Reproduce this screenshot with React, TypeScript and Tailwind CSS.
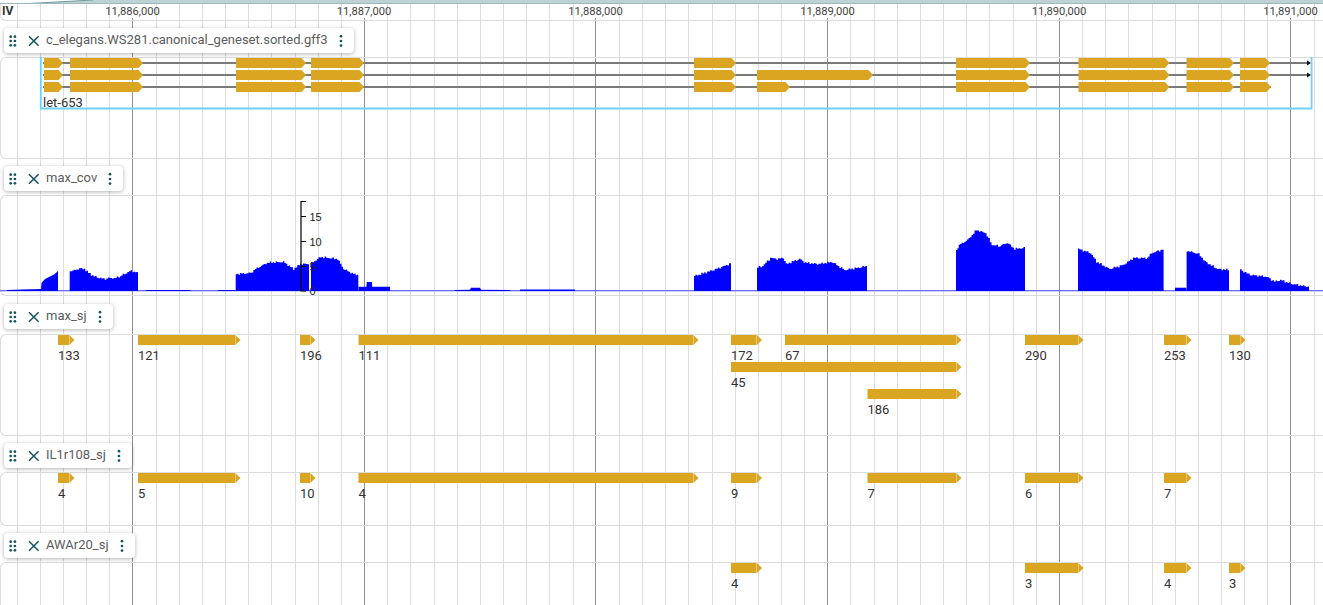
import type { ReactNode } from 'react'

const GOLD = '#daa520'
const TEAL = '#135560'
const MAJOR = [132.5, 364, 595.5, 827.5, 1059, 1290.5]
const COORDS = ['11,886,000', '11,887,000', '11,888,000', '11,889,000', '11,890,000', '11,891,000']

// minor grid lines sit every 100bp, skipping the 1000bp ones
const MINOR = Array.from({ length: 57 }, (_, i) => 16.7 + i * 23.16).filter((_, i) => i % 10 !== 5)

type Exon = [number, number]

const GENE_ROWS: { y: number; end: number; exons: Exon[] }[] = [
  {
    y: 58,
    end: 1310,
    exons: [[44, 62], [70, 142], [236, 305], [311, 363], [694, 735], [956, 1029], [1078.5, 1168.5], [1186.5, 1233], [1240, 1269]],
  },
  {
    y: 70,
    end: 1310,
    exons: [[44, 62], [70, 142], [236, 305], [311, 363], [694, 735], [757, 872], [956, 1029], [1078.5, 1168.5], [1186.5, 1233], [1240, 1269]],
  },
  {
    y: 82,
    end: 1271,
    exons: [[44, 62], [70, 142], [236, 305], [311, 363], [694, 735], [757, 789], [956, 1029], [1078.5, 1168.5], [1186.5, 1233], [1240, 1270]],
  },
]

type Junction = { x0: number; x1: number; y: number; label: string }

const MAX_SJ: Junction[] = [
  { x0: 58, x1: 74, y: 335, label: '133' },
  { x0: 138, x1: 240, y: 335, label: '121' },
  { x0: 300, x1: 315, y: 335, label: '196' },
  { x0: 358.5, x1: 698, y: 335, label: '111' },
  { x0: 731, x1: 761.5, y: 335, label: '172' },
  { x0: 785, x1: 961, y: 335, label: '67' },
  { x0: 731, x1: 961, y: 362, label: '45' },
  { x0: 867.5, x1: 961, y: 389, label: '186' },
  { x0: 1025, x1: 1083, y: 335, label: '290' },
  { x0: 1164, x1: 1191, y: 335, label: '253' },
  { x0: 1229, x1: 1245, y: 335, label: '130' },
]

const IL_SJ: Junction[] = [
  { x0: 58, x1: 74, y: 473, label: '4' },
  { x0: 138, x1: 240, y: 473, label: '5' },
  { x0: 300, x1: 315, y: 473, label: '10' },
  { x0: 358.5, x1: 698, y: 473, label: '4' },
  { x0: 731, x1: 761.5, y: 473, label: '9' },
  { x0: 867.5, x1: 961, y: 473, label: '7' },
  { x0: 1025, x1: 1083, y: 473, label: '6' },
  { x0: 1164, x1: 1191, y: 473, label: '7' },
]

const AWA_SJ: Junction[] = [
  { x0: 731, x1: 761.5, y: 563, label: '4' },
  { x0: 1025, x1: 1083, y: 563, label: '3' },
  { x0: 1164, x1: 1191, y: 563, label: '4' },
  { x0: 1229, x1: 1245, y: 563, label: '3' },
]

// coverage blocks, [x, y] in page pixels, sampled off the wiggle
const COVERAGE: [number, number][][] = [
  [[7, 290], [22, 289.5], [41, 289], [41.5, 283], [45, 279], [50, 276.5], [54, 274.5], [57, 272], [58, 270.5]],
  [[69.7, 271], [75, 270], [79, 268.5], [84, 269], [88, 273], [95, 277], [100, 278], [103, 279], [108, 278], [115, 278], [120, 276], [124, 274], [129, 271], [135, 272], [138, 273]],
  [[146, 290], [190, 290], [190.5, 290.5]],
  [[218, 290], [235, 290]],
  [[235.7, 274], [250, 273], [255, 269], [266.7, 262.7], [283, 262], [293, 269], [300, 264], [309, 264]],
  [[311, 263], [320, 257], [337, 259], [343, 269], [353, 274], [358.3, 275]],
  [[358.5, 286.7], [366.5, 286.7], [366.7, 282], [372, 282], [372.2, 286.7], [390, 286.7]],
  [[455, 290], [470, 289.7], [471, 287.8], [480, 287.8], [481, 289.7], [510, 290]],
  [[520, 289.5], [575, 289.5]],
  [[694, 276], [710, 271], [721, 267], [729, 264], [731, 262.5]],
  [[757, 267.7], [762, 266], [770, 258], [778, 259], [782.5, 257.7], [785.7, 264], [799, 259], [805, 262.7], [817, 264], [831.6, 262], [844, 270], [856, 268], [867, 266]],
  [[956, 250], [958.7, 245], [967, 240], [976, 230], [985, 233], [991.5, 245], [999.7, 246], [1006.6, 242.7], [1014, 249], [1025, 247.7]],
  [[1078, 249], [1090, 253], [1096, 261.7], [1109, 269], [1122.6, 265], [1133, 258], [1147, 258], [1151, 253], [1163.6, 249]],
  [[1175, 287.7], [1186.4, 287.7]],
  [[1186.6, 250.7], [1198, 254], [1204.6, 261.7], [1217, 269], [1229, 270]],
  [[1240, 270], [1249.7, 275], [1266, 276.7], [1274, 281.7], [1280, 280], [1290.6, 283.7], [1309, 287]],
]

// the real wiggle is stepped and noisy, so resample the long blocks with a little fixed jitter
const roughen = (pts: [number, number][]) => {
  if (pts.length < 5 || pts[0][1] > 285) return pts
  const out: [number, number][] = []
  for (let i = 0; i < pts.length - 1; i++) {
    const [x0, y0] = pts[i]
    const [x1, y1] = pts[i + 1]
    const steps = Math.max(1, Math.round((x1 - x0) / 1.5))
    for (let s = 0; s < steps; s++) {
      const x = x0 + ((x1 - x0) * s) / steps
      const y = y0 + ((y1 - y0) * s) / steps
      const noise = Math.sin(x * 2.3) * 0.6 + Math.sin(x * 0.9 + 1) * 0.5
      out.push([x, y + noise], [x + (x1 - x0) / steps, y + noise])
    }
  }
  out.push(pts[pts.length - 1])
  return out
}

const blockPath = (raw: [number, number][]) => {
  const pts = roughen(raw)
  return `M${pts[0][0]} 291 ` + pts.map(([x, y]) => `L${x} ${y}`).join(' ') + ` L${pts[pts.length - 1][0]} 291 Z`
}

function GripIcon() {
  return (
    <svg width="16" height="16" viewBox="0 0 16 16" fill={TEAL} className="shrink-0">
      {[3.7, 8, 12.3].map((y) => (
        <g key={y}>
          <circle cx="4.7" cy={y} r="1.35" />
          <circle cx="8.9" cy={y} r="1.35" />
        </g>
      ))}
    </svg>
  )
}

function CloseIcon() {
  return (
    <svg width="16" height="16" viewBox="0 0 16 16" fill="none" stroke={TEAL} strokeWidth="1.5" className="shrink-0">
      <path d="M3 3.2 12.6 12.8M12.6 3.2 3 12.8" />
    </svg>
  )
}

function MenuIcon() {
  return (
    <svg width="16" height="16" viewBox="0 0 16 16" fill={TEAL} className="shrink-0">
      <circle cx="8" cy="3.2" r="1.35" />
      <circle cx="8" cy="8" r="1.35" />
      <circle cx="8" cy="12.6" r="1.35" />
    </svg>
  )
}

function TrackLabel({ name }: { name: string }) {
  return (
    <div className="relative z-20 ml-1 flex h-[25px] w-fit items-center rounded bg-white pl-[2px] pr-[5px] shadow-[0_1px_4px_rgba(0,0,0,0.3)]">
      <GripIcon />
      <div className="ml-[4px]">
        <CloseIcon />
      </div>
      <span className="ml-[4px] pb-[1px] text-[13px] leading-[20px] text-[#5c5c5c]">{name}</span>
      <div className="ml-[5px]">
        <MenuIcon />
      </div>
    </div>
  )
}

function Track({
  name,
  top,
  spacing,
  height,
  children,
}: {
  name: string
  top: number
  spacing: string
  height: string
  children: ReactNode
}) {
  return (
    <section className={spacing === 'wide' ? 'pt-[8px]' : 'pt-[7px]'}>
      <TrackLabel name={name} />
      <div className={spacing === 'wide' ? 'mt-[5px]' : 'mt-[4px]'}>
        <div className={`relative rounded-l-md border-y border-l border-[#dcdcdc] ${height}`}>
          <div className="absolute -inset-px">
            <TrackCanvas top={top}>{children}</TrackCanvas>
          </div>
        </div>
      </div>
    </section>
  )
}

function TrackCanvas({ top, children }: { top: number; children: ReactNode }) {
  return (
    <svg className="absolute left-0 top-0 h-[160px] w-[1323px] overflow-visible" viewBox={`0 ${top} 1323 160`}>
      {children}
    </svg>
  )
}

function JunctionTrack({ items }: { items: Junction[] }) {
  return (
    <>
      {items.map((j) => (
        <g key={`${j.x0}-${j.y}`}>
          <rect x={j.x0} y={j.y} width={j.x1 - j.x0 - 5} height="10" fill={GOLD} />
          <polygon points={`${j.x1 - 4.6},${j.y} ${j.x1 + 0.5},${j.y + 5} ${j.x1 - 4.6},${j.y + 10}`} fill={GOLD} />
          <text x={j.x0} y={j.y + 25} fontSize="13" fill="#333">
            {j.label}
          </text>
        </g>
      ))}
    </>
  )
}

export default function App() {
  return (
    <div className="relative h-[605px] w-[1323px] overflow-hidden bg-white font-['Roboto',sans-serif]">
      <div className="absolute inset-0">
        {MINOR.map((x) => (
          <div key={x} className="absolute bottom-0 top-[4px] w-px bg-[#dcdcdc]" style={{ left: Math.round(x) }} />
        ))}
        {MAJOR.map((x) => (
          <div key={x} className="absolute bottom-0 top-[18px] w-px bg-[#929292]" style={{ left: Math.floor(x) }} />
        ))}
      </div>

      <svg className="relative block h-[4px] w-[1323px]" viewBox="0 0 1323 4" preserveAspectRatio="none">
        <polygon points="20,4 93,0 1323,0 1323,4" fill="#bcd2d4" />
        <path d="M20 4 93 0" stroke="#6e9a9e" strokeWidth="1" fill="none" />
        <path d="M0 3.5H1323" stroke="#9fb8ba" strokeWidth="1" fill="none" />
      </svg>

      <header className="relative h-[17px] rounded-bl-md border-b border-l border-[#dcdcdc]">
        <span className="absolute left-[1px] top-[1px] text-[12px] font-bold leading-[12px] text-[#333]">IV</span>
        {MAJOR.map((x, i) => (
          <span
            key={x}
            className="absolute top-[1px] -translate-x-1/2 text-[11.2px] leading-[13px] text-[#444]"
            style={{ left: x - 1 }}
          >
            {COORDS[i]}
          </span>
        ))}
      </header>

      <Track name="c_elegans.WS281.canonical_geneset.sorted.gff3" top={57} spacing="normal" height="h-[102px]">
        {GENE_ROWS.map((row) => (
          <g key={row.y}>
            <rect x="43" y={row.y + 4} width={row.end - 43} height="2" fill="#7a7a7a" />
            {row.end > 1300 && <polygon points={`1307,${row.y + 2.5} 1311,${row.y + 5} 1307,${row.y + 7.5}`} fill="#111" />}
            {row.exons.map(([a, b]) => (
              <polygon
                key={a}
                points={`${a},${row.y} ${b - 3.5},${row.y} ${b + 1},${row.y + 5} ${b - 3.5},${row.y + 10} ${a},${row.y + 10}`}
                fill={GOLD}
              />
            ))}
          </g>
        ))}
        <path d="M40.8 57V108.5H1311.6V57" fill="none" stroke="#6ed2fa" strokeWidth="1.8" />
        <text x="43" y="106.5" fontSize="13" fill="#333">
          let-653
        </text>
      </Track>

      <Track name="max_cov" top={195} spacing="normal" height="h-[101px]">
        <rect x="0" y="290" width="1323" height="1.3" fill="#6a6aff" />
        {COVERAGE.map((pts) => (
          <path key={pts[0][0]} d={blockPath(pts)} fill="#0000ff" />
        ))}
        <path d="M306 201.5H301V291H306M301 216.5H306M301 241.5H306M301 266.5H306" fill="none" stroke="#000" strokeWidth="1.2" />
        <g fontFamily="'Liberation Sans', sans-serif" fontSize="11" fill="#222">
          <text x="309.5" y="220.5">15</text>
          <text x="309.5" y="245.5">10</text>
          <text x="309.5" y="270.5">5</text>
          <text x="309.5" y="295">0</text>
        </g>
      </Track>

      <Track name="max_sj" top={334} spacing="wide" height="h-[102px]">
        <JunctionTrack items={MAX_SJ} />
      </Track>

      <Track name="IL1r108_sj" top={472} spacing="normal" height="h-[54px]">
        <JunctionTrack items={IL_SJ} />
      </Track>

      <Track name="AWAr20_sj" top={562} spacing="normal" height="h-[60px]">
        <JunctionTrack items={AWA_SJ} />
      </Track>
    </div>
  )
}
